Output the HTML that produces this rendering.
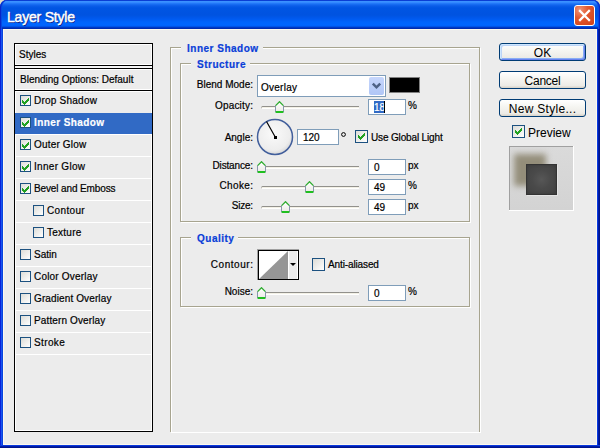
<!DOCTYPE html>
<html><head><meta charset="utf-8"><style>
*{box-sizing:border-box;margin:0;padding:0}
html,body{width:600px;height:448px;overflow:hidden;background:#e2dcc6}
body{position:relative;font-family:"Liberation Sans",sans-serif;font-size:10px;color:#000}
.a{position:absolute}
#title{left:0;top:0;width:600px;height:29px;border-radius:7px 7px 0 0;box-shadow:inset 1px 0 0 #0725c8,inset -1px 0 0 #0725c8,inset 2px 0 0 #0848e0,inset -2px 0 0 #0848e0;
 background:linear-gradient(180deg,#0a3ed4 0px,#0a3ed4 1px,#3d95ff 1px,#3389ff 2.5px,#1a70f5 4px,#0a5ce8 6px,#0055e3 8px,#0053e0 15px,#005af0 19px,#0064fc 22px,#0066ff 25px,#0060f8 26px,#0048d8 27px,#002cb0 28px,#002cb0 29px)}
#frameL{left:0;top:29px;width:3px;height:416px;background:linear-gradient(90deg,#0a22d8 0,#0a22d8 1px,#1a55f0 1px,#1a55f0 2px,#0a45dd 2px)}
#frameR{left:597px;top:29px;width:3px;height:416px;background:linear-gradient(90deg,#0a3ae0 0,#0a3ae0 1px,#001ca8 1px,#001ca8 2px,#00148c 2px)}
#frameB{left:0;top:445px;width:600px;height:3px;background:linear-gradient(180deg,#0a3ae0 0,#0a3ae0 1px,#001ca8 1px,#001ca8 2px,#00148c 2px)}
#content{left:3px;top:29px;width:594px;height:416px;background:#ececec;border:1px solid #fdf9ee}
#ttext{left:7px;top:9px;font-size:14px;-webkit-text-stroke:0.45px #fff;letter-spacing:-0.2px;color:#fff;text-shadow:1px 1px 0 #0a1e80;white-space:nowrap;line-height:16px}
#close{left:574px;top:5px;width:21px;height:21px;border:1px solid #fff;border-radius:3px;
 background:radial-gradient(circle at 25% 20%,#f09478 0,#e2582f 40%,#cf4018 100%)}
#close svg{position:absolute;left:0;top:0}
.t{position:absolute;white-space:nowrap;line-height:12px;-webkit-text-stroke:0.2px #000}
.r{position:absolute;white-space:nowrap;line-height:12px;text-align:right;-webkit-text-stroke:0.2px #000}
.cb{position:absolute;border:1px solid #1c5180;background:linear-gradient(135deg,#dcdcd7,#fff)}
.box{position:absolute;border:1px solid #7f9db9;background:#fff}
.trk{position:absolute;height:3px;border-top:1px solid #92918c;background:#f3f1e6;border-bottom:1px solid #fff;border-left:1px solid #b8b7b2;border-radius:2px 0 0 2px}
.grp{position:absolute;border:1px solid #a7a48f;box-shadow:inset 1px 1px 0 #fff, 1px 1px 0 #fff}
.gt{position:absolute;white-space:nowrap;font-weight:bold;font-size:10px;letter-spacing:0.5px;color:#0a3ed8;-webkit-text-stroke:0.2px #0a3ed8;background:#ececec;padding:0 5px;line-height:12px}
.btn{position:absolute;left:499px;width:87px;height:18px;border:1px solid #003c74;border-radius:3px;
 background:linear-gradient(180deg,#fff 0%,#f6f6f2 40%,#ecebe6 85%,#d6d0c5 100%);font-size:12px;text-align:center;line-height:18px}
</style></head><body>
<div id="title" class="a"></div><div id="frameL" class="a"></div><div id="frameR" class="a"></div><div id="frameB" class="a"></div><div id="content" class="a"></div>
<div id="ttext" class="a">Layer Style</div>
<div id="close" class="a"><svg width="19" height="19" viewBox="0 0 19 19"><path d="M5 5L14 14M14 5L5 14" stroke="#fff" stroke-width="2.3" stroke-linecap="square"/></svg></div>
<div class="a" style="left:14px;top:43px;width:139px;height:389px;background:#000;"></div>
<div class="a" style="left:15px;top:44px;width:137px;height:387px;background:#fff;"></div>
<div class="a" style="left:16px;top:45px;width:135px;height:385px;background:#ececec;"></div>
<div class="a" style="left:15px;top:64px;width:137px;height:1px;background:#fff;"></div>
<div class="a" style="left:14px;top:65px;width:139px;height:1px;background:#000;"></div>
<div class="a" style="left:15px;top:66px;width:137px;height:2px;background:#f4f4f4;"></div>
<div class="a" style="left:14px;top:68px;width:139px;height:1px;background:#000;"></div>
<div class="a" style="left:15px;top:69px;width:137px;height:1px;background:#fff;"></div>
<div class="a" style="left:15px;top:89px;width:137px;height:1px;background:#fff;"></div>
<div class="a" style="left:14px;top:90px;width:139px;height:1px;background:#000;"></div>
<div class="a" style="left:15px;top:91px;width:137px;height:1px;background:#fff;"></div>
<div class="t" style="left:19px;top:49px">Styles</div>
<div class="t" style="left:20px;top:74px">Blending Options: Default</div>
<div class="a" style="left:15px;top:113px;width:137px;height:21px;background:#316ac5;"></div>
<div class="a" style="left:15px;top:134px;width:137px;height:1px;background:#fff;"></div>
<div class="a" style="left:15px;top:156px;width:137px;height:1px;background:#fff;"></div>
<div class="a" style="left:15px;top:178px;width:137px;height:1px;background:#fff;"></div>
<div class="a" style="left:15px;top:200px;width:137px;height:1px;background:#fff;"></div>
<div class="a" style="left:15px;top:222px;width:137px;height:1px;background:#fff;"></div>
<div class="a" style="left:15px;top:244px;width:137px;height:1px;background:#fff;"></div>
<div class="a" style="left:15px;top:266px;width:137px;height:1px;background:#fff;"></div>
<div class="a" style="left:15px;top:288px;width:137px;height:1px;background:#fff;"></div>
<div class="a" style="left:15px;top:310px;width:137px;height:1px;background:#fff;"></div>
<div class="a" style="left:15px;top:332px;width:137px;height:1px;background:#fff;"></div>
<div class="a" style="left:15px;top:354px;width:137px;height:1px;background:#fff;"></div>
<div class="cb" style="left:20px;top:95px;width:11px;height:11px;"></div>
<svg class="a" style="left:22px;top:98px" width="7" height="7" viewBox="0 0 7 7" shape-rendering="crispEdges"><path d="M6 0h1v1h-1zM5 1h2v1h-2zM0 2h1v1h-1zM4 2h3v1h-3zM0 3h2v1h-2zM3 3h3v1h-3zM0 4h5v1h-5zM1 5h3v1h-3zM2 6h1v1h-1z" fill="#21a121"/></svg>
<div class="t" style="left:34px;top:95px;letter-spacing:0.23px">Drop Shadow</div>
<div class="cb" style="left:20px;top:117px;width:11px;height:11px;"></div>
<svg class="a" style="left:22px;top:120px" width="7" height="7" viewBox="0 0 7 7" shape-rendering="crispEdges"><path d="M6 0h1v1h-1zM5 1h2v1h-2zM0 2h1v1h-1zM4 2h3v1h-3zM0 3h2v1h-2zM3 3h3v1h-3zM0 4h5v1h-5zM1 5h3v1h-3zM2 6h1v1h-1z" fill="#21a121"/></svg>
<div class="t" style="left:34px;top:117px;color:#fff;font-weight:bold;font-size:10px;letter-spacing:0.4px;-webkit-text-stroke:0.2px #fff">Inner Shadow</div>
<div class="cb" style="left:20px;top:139px;width:11px;height:11px;"></div>
<svg class="a" style="left:22px;top:142px" width="7" height="7" viewBox="0 0 7 7" shape-rendering="crispEdges"><path d="M6 0h1v1h-1zM5 1h2v1h-2zM0 2h1v1h-1zM4 2h3v1h-3zM0 3h2v1h-2zM3 3h3v1h-3zM0 4h5v1h-5zM1 5h3v1h-3zM2 6h1v1h-1z" fill="#21a121"/></svg>
<div class="t" style="left:34px;top:139px;letter-spacing:0.18px">Outer Glow</div>
<div class="cb" style="left:20px;top:161px;width:11px;height:11px;"></div>
<svg class="a" style="left:22px;top:164px" width="7" height="7" viewBox="0 0 7 7" shape-rendering="crispEdges"><path d="M6 0h1v1h-1zM5 1h2v1h-2zM0 2h1v1h-1zM4 2h3v1h-3zM0 3h2v1h-2zM3 3h3v1h-3zM0 4h5v1h-5zM1 5h3v1h-3zM2 6h1v1h-1z" fill="#21a121"/></svg>
<div class="t" style="left:34px;top:161px;letter-spacing:0.3px">Inner Glow</div>
<div class="cb" style="left:20px;top:183px;width:11px;height:11px;"></div>
<svg class="a" style="left:22px;top:186px" width="7" height="7" viewBox="0 0 7 7" shape-rendering="crispEdges"><path d="M6 0h1v1h-1zM5 1h2v1h-2zM0 2h1v1h-1zM4 2h3v1h-3zM0 3h2v1h-2zM3 3h3v1h-3zM0 4h5v1h-5zM1 5h3v1h-3zM2 6h1v1h-1z" fill="#21a121"/></svg>
<div class="t" style="left:34px;top:183px;letter-spacing:-0.12px">Bevel and Emboss</div>
<div class="cb" style="left:33px;top:205px;width:11px;height:11px;"></div>
<div class="t" style="left:47px;top:205px;letter-spacing:0.35px">Contour</div>
<div class="cb" style="left:33px;top:227px;width:11px;height:11px;"></div>
<div class="t" style="left:47px;top:227px;letter-spacing:0.25px">Texture</div>
<div class="cb" style="left:20px;top:249px;width:11px;height:11px;"></div>
<div class="t" style="left:34px;top:249px;letter-spacing:0px">Satin</div>
<div class="cb" style="left:20px;top:271px;width:11px;height:11px;"></div>
<div class="t" style="left:34px;top:271px;letter-spacing:0.2px">Color Overlay</div>
<div class="cb" style="left:20px;top:293px;width:11px;height:11px;"></div>
<div class="t" style="left:34px;top:293px;letter-spacing:0.12px">Gradient Overlay</div>
<div class="cb" style="left:20px;top:315px;width:11px;height:11px;"></div>
<div class="t" style="left:34px;top:315px;letter-spacing:0.13px">Pattern Overlay</div>
<div class="cb" style="left:20px;top:337px;width:11px;height:11px;"></div>
<div class="t" style="left:34px;top:337px;letter-spacing:0.37px">Stroke</div>
<div class="grp" style="left:170px;top:47px;width:310px;height:385px;border-bottom:none"></div>
<div class="gt" style="left:181px;top:43px;padding-left:6px;padding-right:4px">Inner Shadow</div>
<div class="grp" style="left:180px;top:63px;width:290px;height:159px;"></div>
<div class="gt" style="left:191px;top:59px;padding-left:6px;padding-right:4px">Structure</div>
<div class="grp" style="left:180px;top:237px;width:290px;height:70px;"></div>
<div class="gt" style="left:191px;top:233px;padding-left:6px;padding-right:4px">Quality</div>
<div class="r" style="left:133.00px;width:120px;top:79px;letter-spacing:0px">Blend Mode:</div>
<div class="box" style="left:257px;top:75px;width:129px;height:22px;"></div>
<div class="t" style="left:261px;top:82px;letter-spacing:0.25px">Overlay</div>
<div class="a" style="left:369px;top:77px;width:15px;height:18px;border-radius:2px;background:linear-gradient(180deg,#c6d6fc,#b0c6f6)"></div>
<svg class="a" style="left:369px;top:77px" width="15" height="18" viewBox="0 0 15 18"><path d="M3.8 6.6L7.5 10.3L11.2 6.6" fill="none" stroke="#4d6185" stroke-width="2.5"/></svg>
<div class="a" style="left:389px;top:77px;width:31px;height:16px;background:#808080;"></div>
<div class="a" style="left:390px;top:78px;width:29px;height:14px;background:#000;"></div>
<div class="r" style="left:133.20px;width:120px;top:100px;letter-spacing:0.2px">Opacity:</div>
<div class="trk" style="left:261px;top:106px;width:98px"></div>
<svg class="a" style="left:275px;top:101px" width="9" height="12" viewBox="0 0 9 12"><defs><linearGradient id="tg" x1="0" y1="0" x2="0" y2="1"><stop offset="0" stop-color="#fff"/><stop offset="1" stop-color="#ecebe6"/></linearGradient></defs><path d="M0.5 4.5L4.5 0.5L8.5 4.5V11H0.5Z" fill="url(#tg)" stroke="#8896ac" stroke-width="1"/><path d="M0.6 4.6L4.5 0.7L8.4 4.6" fill="none" stroke="#34b034" stroke-width="1.3"/><rect x="0.5" y="10" width="8" height="2" rx="0.8" fill="#1fbf1f"/></svg>
<div class="box" style="left:368px;top:99px;width:38px;height:16px;"></div>
<div class="a" style="left:374px;top:101px;width:10px;height:12px;background:#316ac5;"></div>
<div class="t" style="left:374px;top:102px;color:#fff;-webkit-text-stroke:0.2px #fff">18</div>
<div class="a" style="left:384px;top:101px;width:1px;height:12px;background:#000;"></div>
<div class="t" style="left:408px;top:100px">%</div>
<div class="r" style="left:133.00px;width:120px;top:132px;letter-spacing:0px">Angle:</div>
<svg class="a" style="left:256px;top:118px" width="38" height="38" viewBox="0 0 38 38"><defs><radialGradient id="dg" cx="45%" cy="40%" r="60%"><stop offset="0" stop-color="#fafafa"/><stop offset="0.8" stop-color="#ededed"/><stop offset="1" stop-color="#d8d8d8"/></radialGradient></defs><circle cx="19" cy="19" r="17.5" fill="url(#dg)" stroke="#425f9c" stroke-width="1.5"/><path d="M19.5 19.5L10.5 3.5" stroke="#000" stroke-width="1.2"/><rect x="18" y="18" width="3" height="3" fill="#000"/></svg>
<div class="box" style="left:297px;top:129px;width:42px;height:16px;"></div>
<div class="t" style="left:303px;top:132px">120</div>
<svg class="a" style="left:341px;top:132px" width="5" height="5" viewBox="0 0 5 5"><circle cx="2.5" cy="2.5" r="1.9" fill="none" stroke="#000" stroke-width="1"/></svg>
<div class="cb" style="left:355px;top:130px;width:13px;height:13px;"></div>
<svg class="a" style="left:358px;top:133px" width="7" height="7" viewBox="0 0 7 7" shape-rendering="crispEdges"><path d="M6 0h1v1h-1zM5 1h2v1h-2zM0 2h1v1h-1zM4 2h3v1h-3zM0 3h2v1h-2zM3 3h3v1h-3zM0 4h5v1h-5zM1 5h3v1h-3zM2 6h1v1h-1z" fill="#21a121"/></svg>
<div class="t" style="left:371px;top:132px;letter-spacing:-0.15px">Use Global Light</div>
<div class="r" style="left:132.85px;width:120px;top:160px;letter-spacing:-0.15px">Distance:</div>
<div class="trk" style="left:261px;top:166px;width:98px"></div>
<svg class="a" style="left:257px;top:161px" width="9" height="12" viewBox="0 0 9 12"><defs><linearGradient id="tg" x1="0" y1="0" x2="0" y2="1"><stop offset="0" stop-color="#fff"/><stop offset="1" stop-color="#ecebe6"/></linearGradient></defs><path d="M0.5 4.5L4.5 0.5L8.5 4.5V11H0.5Z" fill="url(#tg)" stroke="#8896ac" stroke-width="1"/><path d="M0.6 4.6L4.5 0.7L8.4 4.6" fill="none" stroke="#34b034" stroke-width="1.3"/><rect x="0.5" y="10" width="8" height="2" rx="0.8" fill="#1fbf1f"/></svg>
<div class="box" style="left:368px;top:159px;width:38px;height:16px;"></div>
<div class="t" style="left:374px;top:162px">0</div>
<div class="t" style="left:408px;top:160px">px</div>
<div class="r" style="left:133.35px;width:120px;top:180px;letter-spacing:0.35px">Choke:</div>
<div class="trk" style="left:261px;top:186px;width:98px"></div>
<svg class="a" style="left:305px;top:181px" width="9" height="12" viewBox="0 0 9 12"><defs><linearGradient id="tg" x1="0" y1="0" x2="0" y2="1"><stop offset="0" stop-color="#fff"/><stop offset="1" stop-color="#ecebe6"/></linearGradient></defs><path d="M0.5 4.5L4.5 0.5L8.5 4.5V11H0.5Z" fill="url(#tg)" stroke="#8896ac" stroke-width="1"/><path d="M0.6 4.6L4.5 0.7L8.4 4.6" fill="none" stroke="#34b034" stroke-width="1.3"/><rect x="0.5" y="10" width="8" height="2" rx="0.8" fill="#1fbf1f"/></svg>
<div class="box" style="left:368px;top:179px;width:38px;height:16px;"></div>
<div class="t" style="left:374px;top:182px">49</div>
<div class="t" style="left:408px;top:180px">%</div>
<div class="r" style="left:132.75px;width:120px;top:200px;letter-spacing:-0.25px">Size:</div>
<div class="trk" style="left:261px;top:206px;width:98px"></div>
<svg class="a" style="left:281px;top:201px" width="9" height="12" viewBox="0 0 9 12"><defs><linearGradient id="tg" x1="0" y1="0" x2="0" y2="1"><stop offset="0" stop-color="#fff"/><stop offset="1" stop-color="#ecebe6"/></linearGradient></defs><path d="M0.5 4.5L4.5 0.5L8.5 4.5V11H0.5Z" fill="url(#tg)" stroke="#8896ac" stroke-width="1"/><path d="M0.6 4.6L4.5 0.7L8.4 4.6" fill="none" stroke="#34b034" stroke-width="1.3"/><rect x="0.5" y="10" width="8" height="2" rx="0.8" fill="#1fbf1f"/></svg>
<div class="box" style="left:368px;top:199px;width:38px;height:16px;"></div>
<div class="t" style="left:374px;top:202px">49</div>
<div class="t" style="left:408px;top:200px">px</div>
<div class="r" style="left:133.55px;width:120px;top:259px;letter-spacing:0.55px">Contour:</div>
<div class="a" style="left:257px;top:249px;width:42px;height:31px;background:#a0a0a0;"></div>
<div class="a" style="left:258px;top:250px;width:41px;height:30px;background:#000;"></div>
<div class="a" style="left:259px;top:251px;width:29px;height:28px;background:#fff"></div>
<svg class="a" style="left:259px;top:251px" width="29" height="28" viewBox="0 0 29 28"><path d="M0 28L29 0V28Z" fill="#969696"/></svg>
<div class="a" style="left:288px;top:251px;width:10px;height:28px;background:#ececec;border-left:1px solid #fff;border-right:1px solid #fff"></div>
<svg class="a" style="left:290px;top:263px" width="6" height="3" viewBox="0 0 6 3"><path d="M0 0H6L3 3Z" fill="#000"/></svg>
<div class="cb" style="left:312px;top:258px;width:13px;height:13px;"></div>
<div class="t" style="left:328px;top:259px;letter-spacing:-0.12px">Anti-aliased</div>
<div class="r" style="left:133.00px;width:120px;top:286px;letter-spacing:0px">Noise:</div>
<div class="trk" style="left:261px;top:292px;width:98px"></div>
<svg class="a" style="left:257px;top:287px" width="9" height="12" viewBox="0 0 9 12"><defs><linearGradient id="tg" x1="0" y1="0" x2="0" y2="1"><stop offset="0" stop-color="#fff"/><stop offset="1" stop-color="#ecebe6"/></linearGradient></defs><path d="M0.5 4.5L4.5 0.5L8.5 4.5V11H0.5Z" fill="url(#tg)" stroke="#8896ac" stroke-width="1"/><path d="M0.6 4.6L4.5 0.7L8.4 4.6" fill="none" stroke="#34b034" stroke-width="1.3"/><rect x="0.5" y="10" width="8" height="2" rx="0.8" fill="#1fbf1f"/></svg>
<div class="box" style="left:368px;top:285px;width:38px;height:16px;"></div>
<div class="t" style="left:374px;top:288px">0</div>
<div class="t" style="left:408px;top:286px">%</div>
<div class="btn" style="top:43px;box-shadow:inset 1px 1px 0 #cee7ff,inset -1px -1px 0 #6982ee,inset 2px 2px 0 #bcd4f6,inset -2px -2px 0 #89adf4">OK</div>
<div class="btn" style="top:71px;letter-spacing:-0.25px">Cancel</div>
<div class="btn" style="top:99px;letter-spacing:0.3px">New Style...</div>
<div class="cb" style="left:512px;top:125px;width:13px;height:13px;"></div>
<svg class="a" style="left:515px;top:128px" width="7" height="7" viewBox="0 0 7 7" shape-rendering="crispEdges"><path d="M6 0h1v1h-1zM5 1h2v1h-2zM0 2h1v1h-1zM4 2h3v1h-3zM0 3h2v1h-2zM3 3h3v1h-3zM0 4h5v1h-5zM1 5h3v1h-3zM2 6h1v1h-1z" fill="#21a121"/></svg>
<div class="t" style="left:528px;top:126px;font-size:12px;line-height:14px;-webkit-text-stroke:0.05px #000">Preview</div>
<div class="a" style="left:509px;top:146px;width:65px;height:65px;background:#fff;"></div>
<div class="a" style="left:509px;top:146px;width:64px;height:64px;background:#a0a0a0;"></div>
<div class="a" style="left:510px;top:147px;width:63px;height:63px;background:linear-gradient(180deg,#dadada,#d3d3d3);overflow:hidden"><div class="a" style="left:4px;top:7px;width:32px;height:32px;background:#948e7a;filter:blur(3.3px)"></div><div class="a" style="left:17px;top:18px;width:31px;height:31px;background:#e4e4e4"></div><div class="a" style="left:16px;top:17px;width:31px;height:31px;background:radial-gradient(circle at 50% 50%,#575757 0,#4a4a4a 45%,#424242 100%);border:1px solid #333;box-shadow:inset 0 0 3px #3a3a3a"></div></div>
</body></html>
